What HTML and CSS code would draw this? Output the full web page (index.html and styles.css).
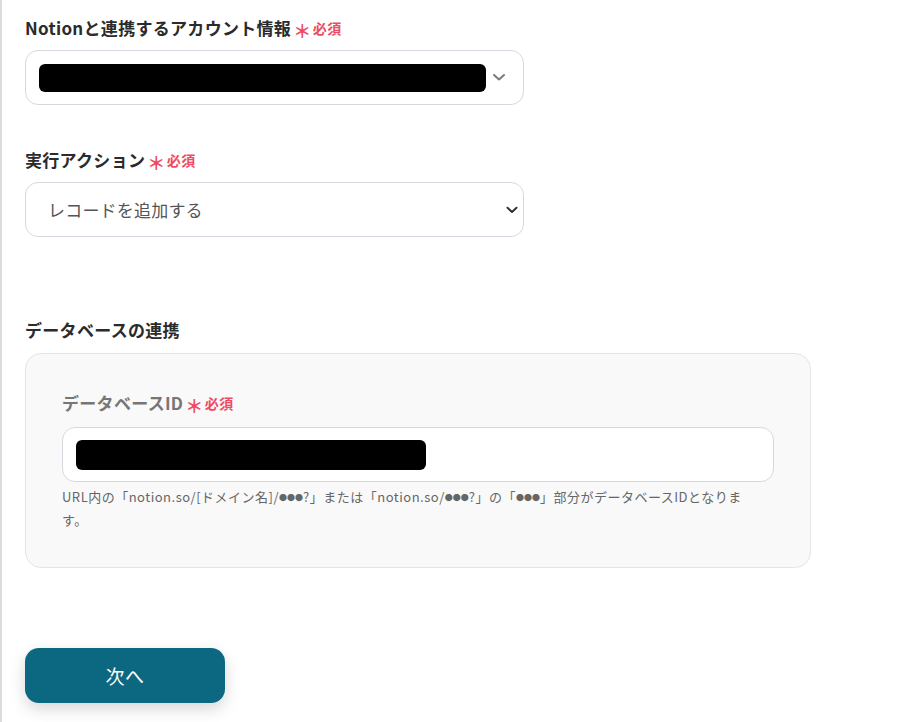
FILE: index.html
```html
<!DOCTYPE html>
<html lang="ja">
<head>
<meta charset="utf-8">
<title>Notion設定</title>
<link rel="stylesheet" href="styles.css">
</head>
<body>
<div class="page">
  <section class="field field-first">
    <div class="label">Notionと連携するアカウント情報<span class="req"><span class="ast">＊</span>必須</span></div>
    <div class="control">
      <span class="redact redact-account"></span>
      <svg class="chev chev-light" width="14" height="9" viewBox="0 0 14 9"><path d="M2 2 L7 6.5 L12 2" fill="none" stroke="#7a7a7a" stroke-width="2" stroke-linecap="round" stroke-linejoin="round"/></svg>
    </div>
  </section>

  <section class="field field-second">
    <div class="label">実行アクション<span class="req"><span class="ast">＊</span>必須</span></div>
    <div class="control control-select">
      <span class="value">レコードを追加する</span>
      <svg class="chev chev-dark" width="12" height="8" viewBox="0 0 12 8"><path d="M1.5 1.8 L6 6 L10.5 1.8" fill="none" stroke="#333" stroke-width="2" stroke-linecap="round" stroke-linejoin="round"/></svg>
    </div>
  </section>

  <section class="field field-third">
    <div class="label">データベースの連携</div>
    <div class="panel">
      <div class="label label-muted">データベースID<span class="req"><span class="ast">＊</span>必須</span></div>
      <div class="control control-input">
        <span class="redact redact-db"></span>
      </div>
      <p class="help">URL内の「notion.so/[ドメイン名]/<span class="dots">●●●</span>?」または「notion.so/<span class="dots">●●●</span>?」の「<span class="dots">●●●</span>」部分がデータベースIDとなりま<br>す。</p>
    </div>
  </section>

  <div class="actions">
    <button class="btn-next" type="button">次へ</button>
  </div>
</div>
</body>
</html>
```

FILE: styles.css
```css
html, body {
  margin: 0;
  padding: 0;
  background: #ffffff;
}

body {
  font-family: "Noto Sans CJK JP", "Noto Sans", sans-serif;
  color: #2b2b2b;
}

.page {
  box-sizing: border-box;
  min-height: 722px;
  border-left: 2px solid #dcdcdc;
  padding: 16px 0 0 23px;
}

.field {
  display: flex;
  flex-direction: column;
  gap: 10px;
}

.field-second {
  margin-top: 43px;
}

.field-third {
  margin-top: 81px;
  gap: 11px;
}

.label {
  display: flex;
  align-items: center;
  font-size: 17px;
  font-weight: 700;
  line-height: 24px;
  color: #2b2b2b;
  letter-spacing: 0.3px;
}

.label-muted {
  color: #767676;
}

.req {
  display: inline-flex;
  align-items: center;
  margin-left: 2px;
  color: #ee4b62;
  font-size: 14px;
  font-weight: 700;
  letter-spacing: 0.5px;
}

.ast {
  font-size: 18px;
  margin-right: 1px;
  position: relative;
  top: 2px;
  font-weight: 700;
}

.control {
  box-sizing: border-box;
  width: 499px;
  height: 55px;
  border: 1px solid #d5d9df;
  border-radius: 13px;
  background: #ffffff;
  display: flex;
  align-items: center;
  padding: 0 13px;
}

.control-select {
  padding: 0 0 0 22px;
  justify-content: space-between;
}

.control-select .chev {
  margin-right: 5px;
}

.value {
  font-size: 17px;
  color: #555555;
  line-height: 24px;
  letter-spacing: 0.2px;
}

.redact {
  display: block;
  background: #000000;
  border-radius: 6px;
}

.redact-account {
  width: 447px;
  height: 28px;
}

.chev-light {
  margin-left: 6px;
}

.panel {
  box-sizing: border-box;
  width: 786px;
  height: 215px;
  background: #f9f9f9;
  border: 1px solid #e5e5e5;
  border-radius: 16px;
  padding: 37px 36px 0 36px;
  display: flex;
  flex-direction: column;
}

.panel .control-input {
  width: 712px;
  margin-top: 12px;
}

.redact-db {
  width: 350px;
  height: 30px;
}

.help {
  margin: 4px 0 0 0;
  font-size: 13px;
  line-height: 22px;
  color: #666666;
  letter-spacing: 0.5px;
}

.dots {
  font-size: 8px;
  letter-spacing: 0;
  vertical-align: 1px;
}

.actions {
  margin-top: 80px;
}

.btn-next {
  width: 200px;
  height: 55px;
  border: none;
  border-radius: 14px;
  background: #0b6880;
  color: #ffffff;
  font-family: "Noto Sans CJK JP", "Noto Sans", sans-serif;
  font-size: 19px;
  font-weight: 400;
  letter-spacing: 0.5px;
  box-shadow: 0 6px 16px rgba(0, 0, 0, 0.16);
  cursor: pointer;
}
```
